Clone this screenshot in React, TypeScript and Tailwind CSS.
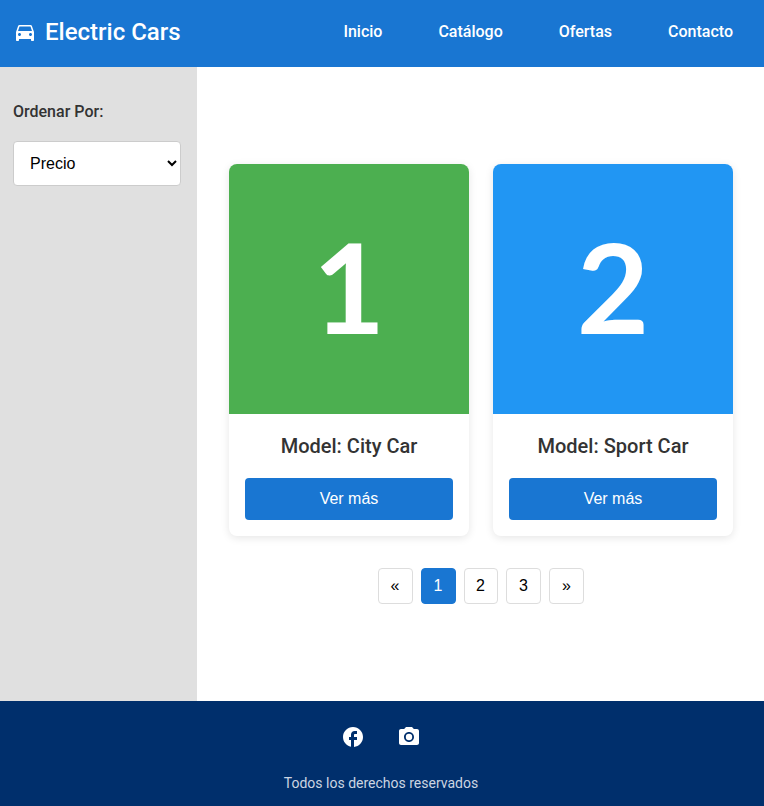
import { MdDirectionsCar, MdFacebook, MdCameraAlt } from "react-icons/md";

const links = ["Inicio", "Catálogo", "Ofertas", "Contacto"];

const cars = [
  { number: "1", name: "City Car", color: "bg-[#4caf50]" },
  { number: "2", name: "Sport Car", color: "bg-[#2196f3]" },
];

const pages = [
  { label: "«", style: "w-[35px]" },
  { label: "1", style: "w-[35px]" },
  { label: "2", style: "w-[34px]" },
  { label: "3", style: "w-[35px] pl-px" },
  { label: "»", style: "w-[35px] pl-px" },
];

function Header() {
  return (
    <header className="flex h-[67px] items-center justify-between bg-[#1976d2] pr-[31px] pb-[3px] pl-[13px] text-white">
      <div className="flex items-center gap-2">
        <MdDirectionsCar className="size-6" />
        <span className="text-2xl font-medium">Electric Cars</span>
      </div>
      <nav className="flex gap-14 text-base font-medium">
        {links.map((link) => (
          <a key={link} href="#">{link}</a>
        ))}
      </nav>
    </header>
  );
}

function Sidebar() {
  return (
    <aside className="w-[197px] shrink-0 bg-[#e0e0e0] px-[13px] pt-[33px]">
      <label htmlFor="sort" className="block font-medium text-[#333]">Ordenar Por:</label>
      <select
        id="sort"
        className="mt-[17px] block h-[45px] w-[168px] rounded border border-[#ccc] bg-white px-3 font-['Liberation_Sans',Arial,sans-serif] text-base text-black"
      >
        <option>Precio</option>
      </select>
    </aside>
  );
}

function CarCard({ number, name, color }: { number: string; name: string; color: string }) {
  return (
    <article className="w-60 overflow-hidden rounded-lg bg-white shadow-[0_2px_8px_rgba(0,0,0,0.1)]">
      <div className={`flex h-[250px] items-center justify-center pb-[6px] font-['Lato',sans-serif] text-[125px] leading-none font-bold text-white ${color}`}>
        {number}
      </div>
      <div className="px-4 pt-[17px] pb-4 text-center">
        <h2 className="text-xl leading-[30px] font-medium text-[#333]">Model: {name}</h2>
        <button className="mt-[17px] block h-[42px] w-full rounded bg-[#1976d2] font-['Liberation_Sans',Arial,sans-serif] text-base text-white">
          Ver más
        </button>
      </div>
    </article>
  );
}

function Pagination() {
  return (
    <div className="mt-8 mr-[1px] flex justify-center gap-2 font-['Liberation_Sans',Arial,sans-serif] text-base">
      {pages.map(({ label, style }) => (
        <button
          key={label}
          className={`h-9 rounded border ${style} ${label === "1" ? "border-[#1976d2] bg-[#1976d2] text-white" : "border-[#ddd] bg-white text-black"}`}
        >
          {label}
        </button>
      ))}
    </div>
  );
}

function Footer() {
  return (
    <footer className="flex h-[105px] flex-col items-center bg-[#002f6c] pt-6 pr-[2px] text-white">
      <div className="flex gap-8">
        <MdFacebook className="size-6" />
        <MdCameraAlt className="size-6" />
      </div>
      <p className="mt-6 text-sm text-[#ccd5e2]">Todos los derechos reservados</p>
    </footer>
  );
}

export default function App() {
  return (
    <div className="flex h-[806px] flex-col font-['Roboto',sans-serif]">
      <Header />
      <div className="flex flex-1">
        <Sidebar />
        <main className="flex-1 bg-white px-8 pt-[97px]">
          <div className="flex gap-6">
            {cars.map((car) => (
              <CarCard key={car.number} {...car} />
            ))}
          </div>
          <Pagination />
        </main>
      </div>
      <Footer />
    </div>
  );
}
